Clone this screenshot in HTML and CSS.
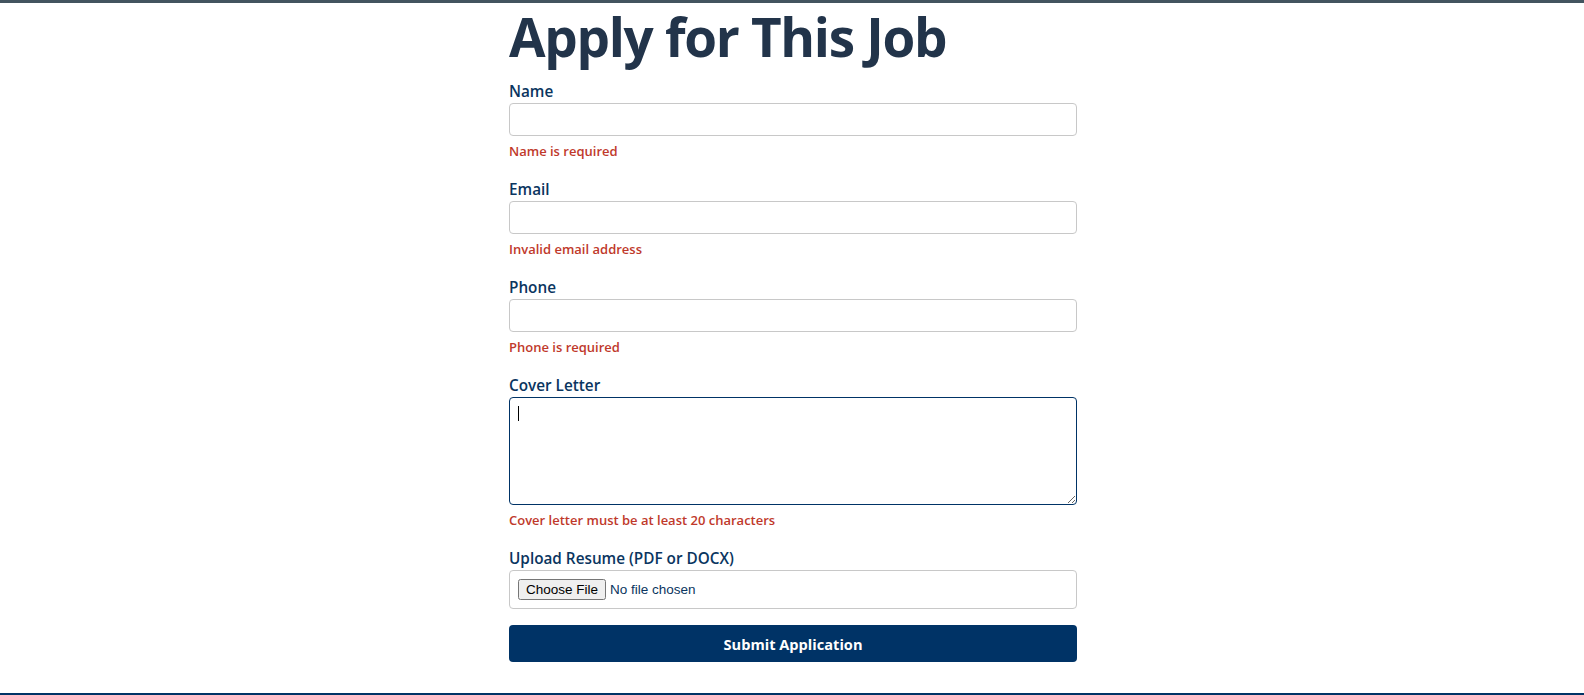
FILE: index.html
```html
<!DOCTYPE html>
<html lang="en">
<head>
<meta charset="utf-8">
<title>Apply for This Job</title>
<link rel="stylesheet" href="styles.css">
</head>
<body>
<div class="topbar"></div>
<main class="container">
  <h1 class="title">Apply for This Job</h1>
  <form class="form" novalidate>
    <div class="group">
      <label class="label" for="name">Name</label>
      <input class="field" id="name" type="text">
      <p class="error">Name is required</p>
    </div>
    <div class="group">
      <label class="label" for="email">Email</label>
      <input class="field" id="email" type="email">
      <p class="error">Invalid email address</p>
    </div>
    <div class="group">
      <label class="label" for="phone">Phone</label>
      <input class="field" id="phone" type="tel">
      <p class="error">Phone is required</p>
    </div>
    <div class="group">
      <label class="label" for="cover">Cover Letter</label>
      <div class="area-wrap">
        <textarea class="field area" id="cover"></textarea>
        <span class="caret"></span>
      </div>
      <p class="error">Cover letter must be at least 20 characters</p>
    </div>
    <div class="group group-last">
      <label class="label" for="resume">Upload Resume (PDF or DOCX)</label>
      <div class="filebox">
        <input class="file" id="resume" type="file" accept=".pdf,.docx">
      </div>
    </div>
    <button class="submit" type="button">Submit Application</button>
  </form>
</main>
<footer class="footer"></footer>
</body>
</html>
```

FILE: styles.css
```css
* { box-sizing: border-box; }
html, body { margin: 0; padding: 0; }
body {
  font-family: "Open Sans", "Noto Sans", sans-serif;
  background: #ffffff;
  color: #003366;
}
.topbar {
  height: 3px;
  background: #43545f;
}
.container {
  width: 600px;
  margin: 0 auto;
  padding: 0 15px 0 17px;
  height: 690px;
}
.title {
  margin: 0;
  font-size: 53px;
  font-weight: 700;
  line-height: 68px;
  color: #22344a;
  letter-spacing: -1.3px;
  height: 77px;
}
.form { display: flex; flex-direction: column; }
.group { margin-bottom: 17px; }
.group-last { margin-bottom: 16px; }
.label {
  display: block;
  font-size: 15.3px;
  font-weight: 600;
  line-height: 22px;
  margin-bottom: 1px;
  color: #0a3560;
}
.field {
  display: block;
  width: 100%;
  height: 33px;
  border: 1px solid #c8c8c8;
  border-radius: 4px;
  padding: 6px 8px;
  font-family: inherit;
  font-size: 14px;
  color: #222;
  background: #fff;
  outline: none;
}
.area-wrap { position: relative; }
.area {
  height: 108px;
  border-color: #003366;
  resize: vertical;
}
.caret {
  position: absolute;
  left: 9px;
  top: 9px;
  width: 1px;
  height: 15px;
  background: #000;
}
.error {
  margin: 5px 0 0;
  font-size: 13px;
  font-weight: 600;
  line-height: 20px;
  color: #c0392b;
}
.filebox {
  border: 1px solid #c8c8c8;
  border-radius: 4px;
  height: 39px;
  padding: 0 8px;
  display: flex;
  align-items: center;
}
.file {
  font-family: "Liberation Sans", Arial, sans-serif;
  font-size: 13.5px;
  color: #0a3560;
}
.submit {
  height: 37px;
  width: 100%;
  border: none;
  border-radius: 4px;
  background: #003366;
  color: #ffffff;
  font-family: inherit;
  font-size: 14.6px;
  font-weight: 700;
  cursor: pointer;
}
.footer {
  border-top: 2px solid #003366;
  height: 2px;
}
```
